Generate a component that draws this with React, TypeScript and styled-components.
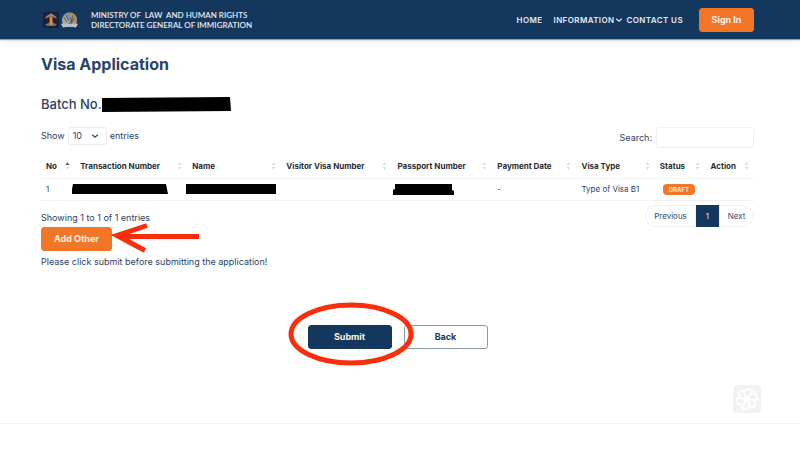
import React from "react";
import styled, { createGlobalStyle } from "styled-components";

const navy = "#14375d";
const orange = "#f27627";
const red = "#fb2d0a";

const GlobalStyle = createGlobalStyle`
  * { box-sizing: border-box; }
  body { margin: 0; background: #fff; color: #2b4263; font-family: Inter, "Liberation Sans", sans-serif; font-size: 9px; line-height: 12px; }
  button, input, select { font: inherit; color: inherit; }
  h1, h2, p { margin: 0; }
`;

const Header = styled.header`
  display: flex;
  align-items: center;
  justify-content: space-between;
  height: 39px;
  padding: 0 46px 0 42px;
  background: ${navy};
  color: #e4eaf1;
  box-shadow: 0 1px 1px #8fa2b6, 0 3px 8px rgba(0, 0, 0, 0.08);
`;

const Brand = styled.a`
  display: flex;
  align-items: center;
  color: inherit;
  text-decoration: none;
`;

const Emblem = styled.svg`
  width: 38px;
  height: 18px;
  margin-right: 11px;
`;

const BrandText = styled.span`
  font-family: Lato, Inter, sans-serif;
  font-size: 8px;
  font-weight: 600;
  line-height: 10px;
  white-space: pre;
`;

const Nav = styled.nav`
  display: flex;
  align-items: center;
`;

const NavLink = styled.a<{ $gap: number }>`
  display: flex;
  align-items: center;
  margin-right: ${(p) => p.$gap}px;
  color: inherit;
  font-size: 8px;
  font-weight: 600;
  letter-spacing: 0.05em;
  text-decoration: none;
`;

const Button = styled.button<{ $tone: "orange" | "navy" | "outline"; $width: number }>`
  width: ${(p) => p.$width}px;
  height: 24px;
  padding: 0;
  border: 1px solid ${(p) => (p.$tone === "orange" ? orange : p.$tone === "navy" ? navy : "#8c9caf")};
  border-radius: 3px;
  background: ${(p) => (p.$tone === "orange" ? orange : p.$tone === "navy" ? navy : "#fff")};
  color: ${(p) => (p.$tone === "outline" ? navy : "#fff2e8")};
  font-weight: 700;
`;

const Main = styled.main`
  padding: 15px 46px 0 41px;
`;

const Title = styled.h1`
  color: #27446a;
  font-size: 16px;
  font-weight: 700;
  line-height: 20px;
`;

const Batch = styled.h2`
  display: flex;
  align-items: center;
  margin-top: 20px;
  font-size: 13px;
  font-weight: 500;
  line-height: 20px;
`;

const Redaction = styled.svg<{ $width: number; $height: number; $shift?: number }>`
  display: block;
  width: ${(p) => p.$width}px;
  height: ${(p) => p.$height}px;
  margin-left: ${(p) => p.$shift ?? 0}px;
`;

const Controls = styled.div`
  display: flex;
  align-items: flex-start;
  justify-content: space-between;
  margin-top: 13px;
`;

const Field = styled.label`
  display: flex;
  align-items: center;
  gap: 3px;
`;

const SelectBox = styled.span`
  display: grid;
  align-items: center;
  width: 39px;
  height: 18px;
  & > * { grid-area: 1 / 1; }
  & > svg { justify-self: end; margin-right: 8px; pointer-events: none; }
`;

const Select = styled.select`
  width: 100%;
  height: 100%;
  padding: 0 4px;
  border: 1px solid #e9ecf0;
  border-radius: 3px;
  background: #fff;
  appearance: none;
`;

const SearchInput = styled.input`
  width: 98px;
  height: 21px;
  margin-left: 1px;
  border: 1px solid #f0f1f3;
  border-radius: 3px;
  background: #fff;
`;

const Table = styled.table`
  width: 100%;
  margin-top: 7px;
  border-collapse: collapse;
  table-layout: fixed;
  font-size: 8px;
`;

const Col = styled.col<{ $share: number }>`
  width: ${(p) => p.$share}%;
`;

const Th = styled.th`
  height: 23px;
  padding: 0 5px;
  border-bottom: 1px solid #f1f2f4;
  color: #292c33;
  font-weight: 700;
  text-align: left;
  white-space: nowrap;
`;

const HeadCell = styled.span`
  display: flex;
  align-items: center;
  justify-content: space-between;
`;

const Td = styled.td`
  height: 22px;
  padding: 0 5px;
  border-bottom: 1px solid #f1f2f4;
  white-space: nowrap;
`;

const Badge = styled.span`
  display: block;
  width: 32px;
  margin-left: 3px;
  border-radius: 4px;
  background: ${orange};
  color: #ffe6d5;
  font-size: 6px;
  font-weight: 700;
  line-height: 11px;
  text-align: center;
`;

const TableFooter = styled.div`
  display: flex;
  align-items: flex-start;
  justify-content: space-between;
  margin-top: 4px;
`;

const Info = styled.p`
  padding-top: 7px;
`;

const Pager = styled.nav`
  display: flex;
  height: 22px;
`;

const PageButton = styled.button<{ $kind: "start" | "current" | "end" }>`
  width: ${(p) => (p.$kind === "start" ? 51 : p.$kind === "end" ? 35 : 23)}px;
  padding: 0;
  border: 1px solid ${(p) => (p.$kind === "current" ? navy : "#eff0f3")};
  border-radius: ${(p) => (p.$kind === "start" ? "11px 0 0 11px" : p.$kind === "end" ? "0 11px 11px 0" : "0")};
  background: ${(p) => (p.$kind === "current" ? navy : "#fff")};
  color: ${(p) => (p.$kind === "current" ? "#e4eaf1" : "#344866")};
  font-size: 8px;
`;

const Marked = styled.div`
  position: relative;
  width: max-content;
`;

const Arrow = styled.svg`
  position: absolute;
  left: 68px;
  top: -5px;
  width: 92px;
  height: 32px;
  pointer-events: none;
`;

const Ring = styled.svg`
  position: absolute;
  left: -20px;
  top: -24px;
  width: 127px;
  height: 66px;
  pointer-events: none;
`;

const Hint = styled.p`
  margin-top: 5px;
`;

const Actions = styled.div`
  display: flex;
  justify-content: center;
  gap: 12px;
  margin-top: 57px;
`;

const Footer = styled.footer`
  display: flex;
  justify-content: flex-end;
  margin-top: 36px;
  padding: 0 39px 10px 0;
  border-bottom: 1px solid #f3f3f4;
`;

const HelpButton = styled.button`
  display: block;
  width: 28px;
  height: 28px;
  padding: 0;
  border: 0;
  border-radius: 4px;
  background: #f2f2f3;
`;

const columns = [
  { label: "No", share: 4.8 },
  { label: "Transaction Number", share: 15.7 },
  { label: "Name", share: 13.2 },
  { label: "Visitor Visa Number", share: 15.6 },
  { label: "Passport Number", share: 14 },
  { label: "Payment Date", share: 11.8 },
  { label: "Visa Type", share: 11 },
  { label: "Status", share: 7.1 },
  { label: "Action", share: 6.8 },
];

function Chevron({ size }: { size: number }) {
  return (
    <svg width={size} height={size} viewBox="0 0 8 8" fill="none" stroke="currentColor" strokeWidth="1.2" aria-hidden="true">
      <path d="M1.3 2.7 4 5.2l2.7-2.5" />
    </svg>
  );
}

function SortIcon({ active }: { active: boolean }) {
  return (
    <svg width="5" height="10" viewBox="0 0 5 10" aria-hidden="true">
      <path d="M.5 4 2.5 1l2 3z" fill={active ? "#59616c" : "#dcdfe3"} />
      <path d="M.5 6 2.5 9l2-3z" fill="#dcdfe3" />
    </svg>
  );
}

function Redacted({ width, height, shift, shape }: { width: number; height: number; shift?: number; shape: string }) {
  return (
    <Redaction $width={width} $height={height} $shift={shift} viewBox={`0 0 ${width} ${height}`} role="img" aria-label="Redacted">
      <path d={shape} fill="#000" />
    </Redaction>
  );
}

export default function App() {
  return (
    <>
      <GlobalStyle />
      <Header>
        <Brand href="#">
          <Emblem viewBox="0 0 38 18" aria-hidden="true">
            <rect x="1" y="1" width="16" height="16" fill="#18213f" />
            <path d="M3 7.5C4.5 4 7 4 9 2c2 2 4.500 2 6 5.500L12 6.500 9 5 6 6.500z" fill="#a78360" />
            <path d="M3 13c3-.2 4.500-1.200 4.500-3V6h3v4c0 1.800 1.500 2.800 4.500 3l-2 2H5z" fill="#806e64" />
            <path d="M7.500 6.500 9 5l1.200 1v8H8V7.500z" fill="#f58a28" />
            <circle cx="27.500" cy="8.800" r="7.500" fill="#718093" />
            <path d="M27 2c5-.8 8 3 8 7 0 3-1.500 5-4 6l-1-4 2-2-3-2z" fill="#b79257" />
            <path d="M20 9c1-4 4-6.500 7-7l-3 5 4-3-2 4 3 1-3 4-5 2z" fill="#a8a79a" />
            <path d="M22 6l3 5M24 4l3 6M31 4l-2 7M33 7l-4 5" stroke="#31506f" strokeWidth=".8" />
            <path d="M19 13c3-1 5 0 8.500 0s6-1 8.500 0l-2 3.500c-4-1-9-1-13 0z" fill="#b8c1ca" />
          </Emblem>
          <BrandText>{"MINISTRY OF  LAW  AND HUMAN RIGHTS\nDIRECTORATE GENERAL OF IMMIGRATION"}</BrandText>
        </Brand>
        <Nav>
          <NavLink href="#" $gap={11}>HOME</NavLink>
          <NavLink href="#" $gap={4}>INFORMATION<Chevron size={8} /></NavLink>
          <NavLink href="#" $gap={16}>CONTACT US</NavLink>
          <Button type="button" $tone="orange" $width={55}>Sign In</Button>
        </Nav>
      </Header>
      <Main>
        <Title>Visa Application</Title>
        <Batch>
          Batch No.
          <Redacted width={129} height={15} shape="M0 1 128 0l1 14L0 15z" />
        </Batch>
        <Controls>
          <Field>
            Show
            <SelectBox>
              <Select defaultValue="10" aria-label="Entries per page">
                <option>10</option>
                <option>25</option>
              </Select>
              <Chevron size={8} />
            </SelectBox>
            entries
          </Field>
          <Field>
            Search:
            <SearchInput type="search" />
          </Field>
        </Controls>
        <Table>
          <colgroup>
            {columns.map((c) => <Col key={c.label} $share={c.share} />)}
          </colgroup>
          <thead>
            <tr>
              {columns.map((c, i) => (
                <Th key={c.label} scope="col">
                  <HeadCell>{c.label}<SortIcon active={i === 0} /></HeadCell>
                </Th>
              ))}
            </tr>
          </thead>
          <tbody>
            <tr>
              <Td>1</Td>
              <Td><Redacted width={96} height={10} shift={-8} shape="M1 0h93l2 10H0V5z" /></Td>
              <Td><Redacted width={90} height={11} shift={-6} shape="M0 0h90v10H0z" /></Td>
              <Td />
              <Td><Redacted width={61} height={11} shift={-4} shape="M2 0h57v6l2 1v4H0V6l2-1z" /></Td>
              <Td>-</Td>
              <Td>Type of Visa B1</Td>
              <Td><Badge>DRAFT</Badge></Td>
              <Td />
            </tr>
          </tbody>
        </Table>
        <TableFooter>
          <Info>Showing 1 to 1 of 1 entries</Info>
          <Pager aria-label="Pagination">
            <PageButton type="button" $kind="start">Previous</PageButton>
            <PageButton type="button" $kind="current">1</PageButton>
            <PageButton type="button" $kind="end">Next</PageButton>
          </Pager>
        </TableFooter>
        <Marked>
          <Button type="button" $tone="orange" $width={71}>Add Other</Button>
          <Arrow viewBox="0 0 92 32" fill="none" stroke={red} aria-hidden="true">
            <path d="M12 14.500H90" strokeWidth="5" />
            <path d="M38 3.500 8 13.500 36 28.500" strokeWidth="5" />
            <path d="M2 13 20 8v11z" fill={red} stroke="none" />
          </Arrow>
        </Marked>
        <Hint>Please click submit before submitting the application!</Hint>
        <Actions>
          <Marked>
            <Button type="button" $tone="navy" $width={84}>Submit</Button>
            <Ring viewBox="0 0 127 66" fill="none" stroke={red} aria-hidden="true">
              <ellipse cx="63" cy="33" rx="60" ry="29" strokeWidth="5" />
            </Ring>
          </Marked>
          <Button type="button" $tone="outline" $width={84}>Back</Button>
        </Actions>
      </Main>
      <Footer>
        <HelpButton type="button" aria-label="Assistant">
          <svg width="28" height="28" viewBox="0 0 30 30" fill="none" stroke="#fff" strokeWidth="2.400" strokeLinecap="round">
            <circle cx="15" cy="15" r="3.500" fill="#fff" stroke="none" />
            {[15, 75, 135, 195, 255, 315].map((a) => (
              <path key={a} transform={`rotate(${a} 15 15)`} d="M11.500 6C12.500 3.500 18.500 3 18.500 6.500c0 2-1.500 2.500-2 4.500" />
            ))}
          </svg>
        </HelpButton>
      </Footer>
    </>
  );
}
